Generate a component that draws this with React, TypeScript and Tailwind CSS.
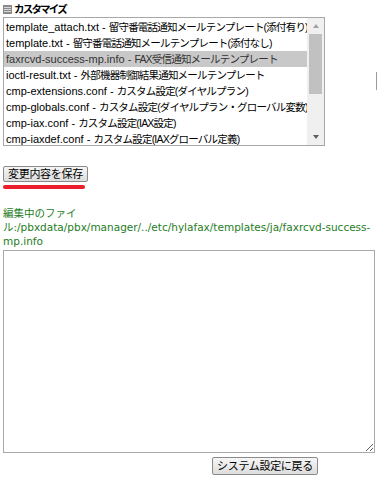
import React from 'react';

const FILES = [
  { name: 'template_attach.txt', desc: '留守番電話通知メールテンプレート(添付有り)' },
  { name: 'template.txt', desc: '留守番電話通知メールテンプレート(添付なし)' },
  { name: 'faxrcvd-success-mp.info', desc: 'FAX受信通知メールテンプレート' },
  { name: 'ioctl-result.txt', desc: '外部機器制御結果通知メールテンプレート' },
  { name: 'cmp-extensions.conf', desc: 'カスタム設定(ダイヤルプラン)' },
  { name: 'cmp-globals.conf', desc: 'カスタム設定(ダイヤルプラン・グローバル変数)' },
  { name: 'cmp-iax.conf', desc: 'カスタム設定(IAX設定)' },
  { name: 'cmp-iaxdef.conf', desc: 'カスタム設定(IAXグローバル定義)' },
];

const SELECTED = 2;

const jp = { fontFamily: '"Liberation Sans", "Noto Sans CJK JP", sans-serif' };

export default function App() {
  return (
    <div className="relative w-[378px] h-[480px] bg-white text-black overflow-hidden" style={jp}>
      {/* Heading */}
      <div className="flex items-center gap-[2px] pl-[3px] pt-[3px] h-[16px]">
        <svg width="9" height="9" viewBox="0 0 9 9" className="shrink-0">
          <rect x="0" y="0" width="9" height="9" fill="#8a8a8a" />
          <rect x="1" y="2" width="7" height="1" fill="#d8d8d8" />
          <rect x="1" y="4" width="7" height="1" fill="#d8d8d8" />
          <rect x="1" y="6" width="7" height="1" fill="#d8d8d8" />
        </svg>
        <h2 className="text-[10.5px] font-bold leading-none tracking-[-1.8px]">カスタマイズ</h2>
      </div>

      {/* File list */}
      <div className="ml-[3px] mt-[1px] w-[322px] h-[129px] border border-[#a8a8a8] flex">
        <ul className="flex-1 pt-[1px] overflow-hidden">
          {FILES.map((f, i) => (
            <li
              key={f.name}
              className={`h-[16px] pl-[2px] text-[11px] leading-[16px] whitespace-nowrap ${
                i === SELECTED ? 'bg-[#c8c8c8] text-[#333]' : ''
              }`}
            >
              {f.name} - <span className="text-[10.5px] tracking-[-0.8px]">{f.desc}</span>
            </li>
          ))}
        </ul>
        <div className="w-[17px] bg-[#f0f0f0] flex flex-col items-center">
          <svg width="8" height="16" viewBox="0 0 8 16" className="shrink-0">
            <path d="M1 10 L4 6 L7 10 Z" fill="#a3a3a3" />
          </svg>
          <div className="w-[13px] h-[60px] bg-[#c1c1c1]" />
          <div className="flex-1" />
          <svg width="8" height="16" viewBox="0 0 8 16" className="shrink-0">
            <path d="M1 6 L7 6 L4 10 Z" fill="#606060" />
          </svg>
        </div>
      </div>

      {/* Save button */}
      <div className="pl-[3px] mt-[20px] flex flex-col items-start">
        <button className="h-[16px] px-[4px] text-[11px] leading-none border border-[#8a8a8a] bg-gradient-to-b from-[#f6f6f6] to-[#dddddd] rounded-[2px] tracking-[-0.3px]">
          変更内容を保存
        </button>
        <div className="mt-[3px] w-[82px] h-[4px] rounded-full bg-[#ea1e2d]" />
      </div>

      {/* Editing file */}
      <p
        className="mt-[17px] pl-[3px] pr-[4px] text-[10.5px] leading-[14px] text-[#1e7d1e] break-words"
        style={{ fontFamily: '"DejaVu Sans", "Noto Sans CJK JP", sans-serif' }}
      >
        編集中のファイル:/pbxdata/pbx/manager/../etc/hylafax/templates/ja/faxrcvd-success-mp.info
      </p>

      <textarea className="block ml-[3px] mt-[2px] w-[372px] h-[203px] border border-[#a9a9a9] resize-y" />

      <div className="pl-[212px] mt-[4px] flex">
        <button className="h-[18px] px-[4px] text-[11px] leading-none border border-[#8a8a8a] bg-gradient-to-b from-[#f6f6f6] to-[#dddddd] rounded-[2px] tracking-[-0.3px]">
          システム設定に戻る
        </button>
      </div>

      {/* edge of an offscreen element */}
      <div className="absolute left-[376px] top-[72px] w-[1px] h-[18px] bg-[#9a9a9a]" />
    </div>
  );
}
